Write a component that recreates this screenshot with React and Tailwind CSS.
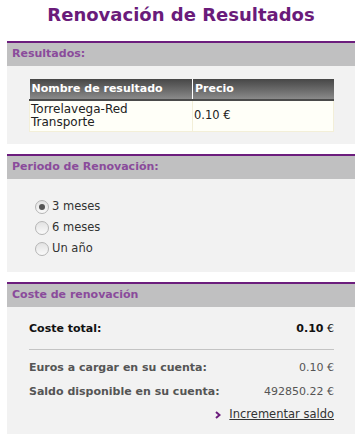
import React, { useState } from 'react'

const font = { fontFamily: '"DejaVu Sans", Verdana, sans-serif' }

const Panel = ({ title, children, className }) => (
  <div className="mx-[7px] border-t-2 border-[#6c1d7d]">
    <div className="h-[23px] bg-[#c0c0c1] px-[5px] flex items-center text-[11px] font-bold text-[#8a4b9b]">
      {title}
    </div>
    <div className={'bg-[#f2f2f2] ' + className}>{children}</div>
  </div>
)

const Radio = ({ checked, label, onClick }) => (
  <div className="h-[21px] flex items-center cursor-pointer" onClick={onClick}>
    <span className="w-[14px] h-[14px] rounded-full border border-[#b5b5b5] bg-gradient-to-b from-[#e2e2e2] to-[#fafafa] flex items-center justify-center">
      {checked && <span className="w-[6px] h-[6px] rounded-full bg-[#555]" />}
    </span>
    <span className="ml-[3px] text-[11.5px] text-[#333]">{label}</span>
  </div>
)

export default function App() {
  const [period, setPeriod] = useState('3')

  return (
    <div className="w-[362px] h-[441px] bg-white" style={font}>
      <div className="h-[41px] pt-[3px] text-center text-[18px] leading-[24px] font-bold text-[#6a1b7a]">
        Renovación de Resultados
      </div>

      <Panel title="Resultados:" className="pt-[13px] pb-[12px] pl-[22px] pr-[21px]">
        <table className="w-full border-collapse text-[11px]">
          <thead>
            <tr className="h-[21px] bg-gradient-to-b from-[#474747] to-[#8e8e8e] text-white font-bold text-left">
              <th className="w-[163px] px-[2px] border-r border-white border-b-2 border-b-[#4a4a4a]">Nombre de resultado</th>
              <th className="px-[2px] border-b-2 border-b-[#4a4a4a]">Precio</th>
            </tr>
          </thead>
          <tbody>
            <tr className="h-[31px] bg-[#fffff8] text-[#222] text-[12px] leading-[13px]">
              <td className="px-[1px] border-l border-b border-[#f3efd8] border-r border-r-[#f3efd8]">Torrelavega-Red<br />Transporte</td>
              <td className="px-[1px] border-r border-b border-[#f3efd8] text-[11.5px]">0.10 €</td>
            </tr>
          </tbody>
        </table>
      </Panel>

      <div className="h-[10px]" />

      <Panel title="Periodo de Renovación:" className="pt-[18px] pb-[12px] pl-[28px]">
        <Radio checked={period === '3'} label="3 meses" onClick={() => setPeriod('3')} />
        <Radio checked={period === '6'} label="6 meses" onClick={() => setPeriod('6')} />
        <Radio checked={period === '12'} label="Un año" onClick={() => setPeriod('12')} />
      </Panel>

      <div className="h-[10px]" />

      <Panel title="Coste de renovación" className="pt-[9px] pb-[9px] pl-[22px] pr-[21px] text-[11px]">
        <div className="h-[28px] flex items-center justify-between text-[#111]">
          <span className="font-bold">Coste total:</span>
          <span><span className="font-bold">0.10</span> €</span>
        </div>
        <div className="mt-[5px] h-px bg-[#c4c4c4]" />
        <div className="mt-[7px] h-[24px] flex items-center justify-between text-[#555]">
          <span className="font-bold">Euros a cargar en su cuenta:</span>
          <span>0.10 €</span>
        </div>
        <div className="h-[24px] flex items-center justify-between text-[#555]">
          <span className="font-bold">Saldo disponible en su cuenta:</span>
          <span>492850.22 €</span>
        </div>
        <div className="h-[20px] flex items-center justify-end">
          <svg width="6" height="8" viewBox="0 0 6 8" className="mr-[8px] mt-[1px]">
            <polyline points="1,1 4.5,4 1,7" fill="none" stroke="#6c1d7d" strokeWidth="2" />
          </svg>
          <a href="#" className="text-[#333] underline text-[11.5px]">Incrementar saldo</a>
        </div>
      </Panel>
    </div>
  )
}
